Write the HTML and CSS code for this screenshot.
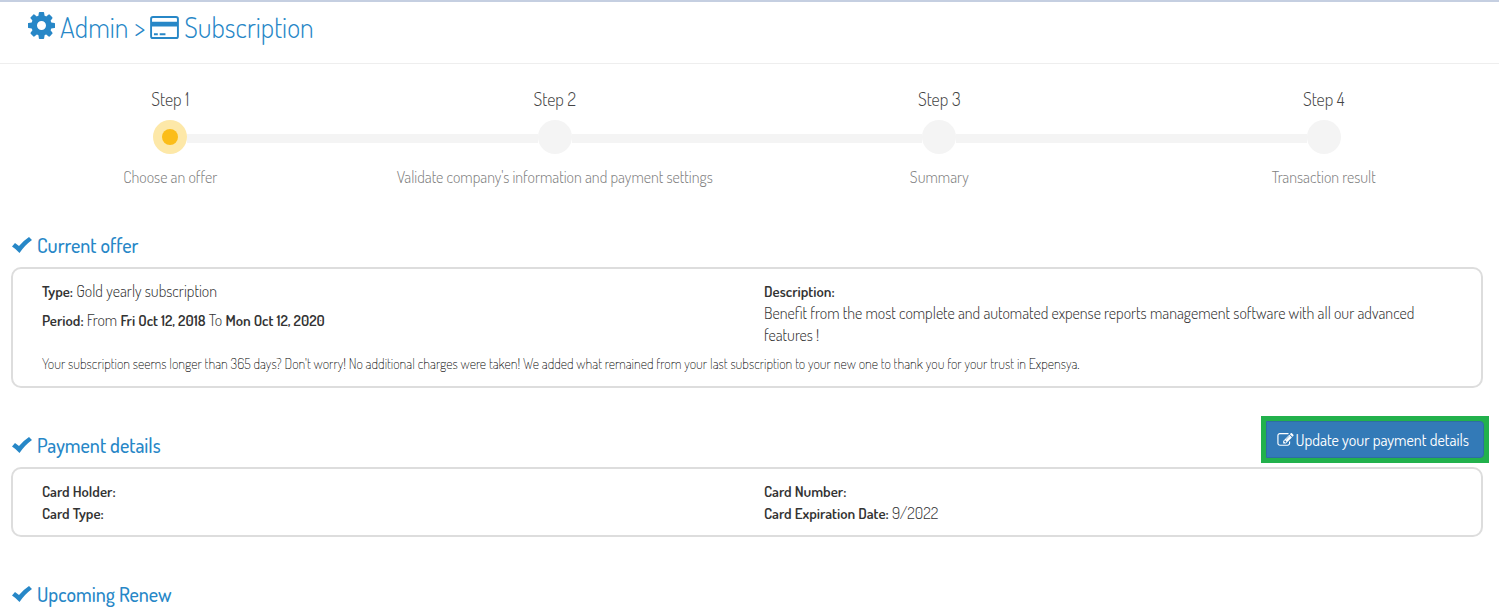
FILE: index.html
```
<!DOCTYPE html>
<html lang="en">
<head>
    <meta charset="UTF-8">
    <meta name="viewport" content="width=device-width, initial-scale=1.0">
    <title>Admin - Subscription</title>
    <link rel="stylesheet" href="styles.css">
</head>
<body>
    <!-- shared icons -->
    <svg class="icon-sprite" aria-hidden="true">
        <symbol id="icon-check" viewBox="0 0 20 16">
            <path d="M0 9.500L3 6L7 9Q11 4 17 0L20 3Q13 8 7.500 16Q4 12 0 9.500Z"/>
        </symbol>
    </svg>

    <header class="page-header">
        <h1 class="page-title">
            <svg class="icon-cog" viewBox="128 128 1536 1536" aria-hidden="true">
                <path d="M1152 896q0-106-75-181t-181-75-181 75-75 181 75 181 181 75 181-75 75-181zm512-109v222q0 12-8 23t-20 13l-185 28q-19 54-39 91 35 50 107 138 10 12 10 25t-9 23q-27 37-99 108t-94 71q-12 0-26-9l-138-108q-44 23-91 38-16 136-29 186-7 28-36 28h-222q-14 0-24.500-8.500t-11.500-21.500l-28-184q-49-16-90-37l-141 107q-10 9-25 9-14 0-25-11-126-114-165-168-7-10-7-23 0-12 8-23 15-21 51-66.500t54-70.500q-27-50-41-99l-183-27q-13-2-21-12.500t-8-23.500v-222q0-12 8-23t19-13l186-28q14-46 39-92-40-57-107-138-10-12-10-24 0-10 9-23 26-36 98.500-107.500t94.500-71.500q13 0 26 10l138 107q44-23 91-38 16-136 29-186 7-28 36-28h222q14 0 24.500 8.500t11.500 21.500l28 184q49 16 90 37l142-107q9-9 24-9 13 0 25 10 129 119 165 170 7 8 7 22 0 12-8 23-15 21-51 66.500t-54 70.500q26 50 41 98l183 28q13 2 21 12.500t8 23.500z"/>
            </svg>
            <span>Admin &gt;</span>
            <svg class="icon-card" viewBox="0 0 30 24" aria-hidden="true">
                <path fill-rule="evenodd" d="M3 0H27Q30 0 30 3V21Q30 24 27 24H3Q0 24 0 21V3Q0 0 3 0ZM3 2Q2 2 2 3V6H28V3Q28 2 27 2ZM2 11V21Q2 22 3 22H27Q28 22 28 21V11ZM4 18H8V20H4ZM10 18H16V20H10Z"/>
            </svg>
            <span>Subscription</span>
        </h1>
    </header>

    <main>
        <div class="steps-wrapper">
            <ol class="steps">
                <li class="step active">
                    <div class="step-number">Step 1</div>
                    <div class="step-track"><span class="step-dot"></span></div>
                    <div class="step-info">Choose an offer</div>
                </li>
                <li class="step">
                    <div class="step-number">Step 2</div>
                    <div class="step-track"><span class="step-dot"></span></div>
                    <div class="step-info">Validate company's information and payment settings</div>
                </li>
                <li class="step">
                    <div class="step-number">Step 3</div>
                    <div class="step-track"><span class="step-dot"></span></div>
                    <div class="step-info">Summary</div>
                </li>
                <li class="step">
                    <div class="step-number">Step 4</div>
                    <div class="step-track"><span class="step-dot"></span></div>
                    <div class="step-info">Transaction result</div>
                </li>
            </ol>
        </div>

        <section class="section">
            <div class="section-header">
                <h2 class="section-title"><svg class="icon-check" aria-hidden="true"><use href="#icon-check"/></svg>Current offer</h2>
            </div>
            <div class="panel">
                <div class="panel-row">
                    <div class="panel-col spaced">
                        <p><strong>Type:</strong> Gold yearly subscription</p>
                        <p><strong>Period:</strong> From <strong>Fri Oct 12, 2018</strong> To <strong>Mon Oct 12, 2020</strong></p>
                    </div>
                    <div class="panel-col">
                        <p><strong>Description:</strong></p>
                        <p>Benefit from the most complete and automated expense reports management software with all our advanced features !</p>
                    </div>
                </div>
                <p class="note">Your subscription seems longer than 365 days? Don't worry! No additional charges were taken! We added what remained from your last subscription to your new one to thank you for your trust in Expensya.</p>
            </div>
        </section>

        <section class="section">
            <div class="section-header">
                <h2 class="section-title"><svg class="icon-check" aria-hidden="true"><use href="#icon-check"/></svg>Payment details</h2>
                <div class="highlight">
                    <button type="button" class="btn-update">
                        <svg class="icon-edit" viewBox="0 128 1792 1536" aria-hidden="true">
                            <path d="M888 1184l116-116-152-152-116 116v56h96v96h56zm440-720q-16-16-33 1l-350 350q-17 17-1 33t33-1l350-350q17-17 1-33zm80 594v190q0 119-84.500 203.500t-203.500 84.500h-832q-119 0-203.500-84.500t-84.500-203.500v-832q0-119 84.500-203.500t203.500-84.500h832q63 0 117 25 15 7 18 23 3 17-9 29l-49 49q-14 14-32 8-23-6-45-6h-832q-66 0-113 47t-47 113v832q0 66 47 113t113 47h832q66 0 113-47t47-113v-126q0-13 9-22l64-64q15-15 35-7t20 29zm-96-738l288 288-672 672h-288v-288zm444 132l-92 92-288-288 92-92q28-28 68-28t68 28l152 152q28 28 28 68t-28 68z"/>
                        </svg>
                        Update your payment details
                    </button>
                </div>
            </div>
            <div class="panel">
                <div class="panel-row">
                    <div class="panel-col">
                        <p><strong>Card Holder:</strong></p>
                        <p><strong>Card Type:</strong></p>
                    </div>
                    <div class="panel-col">
                        <p><strong>Card Number:</strong></p>
                        <p><strong>Card Expiration Date:</strong> 9/2022</p>
                    </div>
                </div>
            </div>
        </section>

        <section class="section">
            <div class="section-header">
                <h2 class="section-title"><svg class="icon-check" aria-hidden="true"><use href="#icon-check"/></svg>Upcoming Renew</h2>
            </div>
        </section>
    </main>
</body>
</html>
```
FILE: styles.css
```
* {
    margin: 0;
    padding: 0;
    box-sizing: border-box;
}

body {
    font-family: Dosis, Lato, sans-serif;
    font-size: 16px;
    font-weight: 300;
    line-height: 22px;
    color: #333;
    background: #fff;
    border-top: 2px solid #c5cfe1;
    overflow-x: hidden;
}

svg {
    fill: currentColor;
    flex-shrink: 0;
}

.icon-sprite {
    display: none;
}

.page-header {
    padding: 7px 28px 17px;
    border-bottom: 1px solid #eee;
}

.page-title {
    display: flex;
    align-items: center;
    gap: 5px;
    font-size: 28px;
    font-weight: 300;
    line-height: 37px;
    color: #2787c7;
}

.icon-cog {
    width: 27px;
    height: 27px;
    margin-bottom: 4px;
}

.icon-card {
    width: 29px;
    height: 23px;
}

/* Progress steps */
.steps-wrapper {
    overflow: hidden;
}

.steps {
    display: grid;
    grid-template-columns: repeat(4, 1fr);
    margin: 0 -17px 0 -22px;
    padding-top: 23px;
    list-style: none;
    text-align: center;
}

.step-number {
    font-size: 18px;
    line-height: 24px;
    color: #444;
}

.step-track {
    display: grid;
    grid-template-columns: 1fr 34px 1fr;
    align-items: center;
    margin: 9px 0 12px;
}

.step-track::before,
.step-track::after {
    content: '';
    height: 9px;
    margin-top: 3px;
    background: #f4f4f4;
}

.step:first-child .step-track::before,
.step:last-child .step-track::after {
    visibility: hidden;
}

.step-dot {
    display: flex;
    align-items: center;
    justify-content: center;
    height: 34px;
    border-radius: 50%;
    background: #f4f4f4;
}

.step.active .step-dot {
    background: #fde8a8;
}

.step.active .step-dot::after {
    content: '';
    width: 16px;
    height: 16px;
    border-radius: 50%;
    background: #fbbd19;
}

.step-info {
    color: #808080;
}

/* Sections */
.section {
    padding: 0 16px 0 11px;
}

.section-header {
    display: flex;
    align-items: flex-end;
    justify-content: space-between;
    height: 79px;
}

.section-title {
    display: flex;
    align-items: center;
    gap: 4px;
    padding-bottom: 8px;
    font-size: 20px;
    font-weight: 500;
    line-height: 28px;
    color: #2787c7;
}

.icon-check {
    width: 22px;
    height: 16px;
}

.panel {
    padding: 11px 29px;
    border: 2px solid #ddd;
    border-radius: 10px;
}

.panel-row {
    display: grid;
    grid-template-columns: 1fr 1fr;
    gap: 34px;
}

.panel-col.spaced {
    display: flex;
    flex-direction: column;
    gap: 7px;
}

.panel strong {
    font-size: 15px;
    font-weight: 600;
    line-height: 20px;
}

.note {
    margin-top: 7px;
    font-size: 14px;
    font-weight: 200;
    color: #000;
}

.highlight {
    margin: 0 -6px 4px 0;
    padding: 5px;
    background: #22b14c;
}

.btn-update {
    display: flex;
    align-items: center;
    gap: 2px;
    height: 37px;
    padding: 0 14px 0 10px;
    font: inherit;
    font-weight: 400;
    color: #fff;
    background: #337ab7;
    border: 1px solid #2e6da4;
    border-radius: 0 4px 4px 0;
    cursor: pointer;
}

.icon-edit {
    width: 17px;
    height: 14px;
}
```
